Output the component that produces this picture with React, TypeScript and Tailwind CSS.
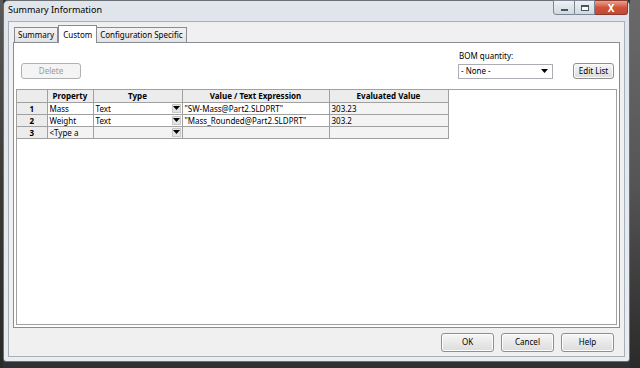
import React from "react";

const font = { fontFamily: '"Noto Sans", "Open Sans", Arial, sans-serif' };

function Arrow() {
  return (
    <svg width="7" height="4" viewBox="0 0 7 4" className="block">
      <path d="M0 0 L7 0 L3.5 4 Z" fill="#000" />
    </svg>
  );
}

function Btn({ children, className = "" }: { children: React.ReactNode; className?: string }) {
  return (
    <div
      className={
        "flex items-center justify-center rounded-[3px] border border-[#8e8f8f] bg-gradient-to-b from-[#f6f6f6] to-[#dcdcdc] text-[8px] text-black shadow-[inset_0_0_0_1px_#fcfcfc] " +
        className
      }
    >
      {children}
    </div>
  );
}

const rows = [
  { n: "1", p: "Mass", t: "Text", v: "\"SW-Mass@Part2.SLDPRT\"", e: "303.23" },
  { n: "2", p: "Weight", t: "Text", v: "\"Mass_Rounded@Part2.SLDPRT\"", e: "303.2" },
  { n: "3", p: "<Type a", t: "", v: "", e: "" },
];

export default function App() {
  return (
    <div className="relative w-[640px] h-[368px] overflow-hidden bg-[#2f3133] flex" style={font}>
      <div className="w-[3px] h-full bg-gradient-to-b from-[#5a5a5a] via-[#3d3a35] to-[#2a2a2a]" />
      <div className="w-[627px] h-[362px] flex flex-col bg-gradient-to-b from-[#dfe5ea] to-[#e9edf0] border border-[#6b7075] rounded-t-[5px] rounded-b-[3px]">
        {/* title bar */}
        <div className="relative h-[20px] flex items-start shrink-0">
          <div className="pl-[4px] pt-[3px] text-[9px] leading-[12px] text-black">Summary Information</div>
          <div className="ml-auto mr-[1px] flex h-[15px] -mt-[1px]">
            <div className="w-[22px] h-full border border-[#7c8590] rounded-bl-[3px] bg-gradient-to-b from-[#eef2f5] to-[#cfd7df] flex items-center justify-center">
              <div className="w-[7px] h-[2px] border border-[#4a5560] bg-white mt-[4px]" />
            </div>
            <div className="w-[20px] h-full border-y border-r border-[#7c8590] bg-gradient-to-b from-[#eef2f5] to-[#cfd7df] flex items-center justify-center">
              <div className="w-[8px] h-[6px] border border-[#4a5560] border-t-2 bg-white" />
            </div>
            <div className="w-[33px] h-full border-y border-r border-[#8a3a2e] rounded-br-[3px] bg-gradient-to-b from-[#e8a190] via-[#d0533c] to-[#c24a33] flex items-center justify-center text-white text-[10px] font-bold leading-none">
              X
            </div>
          </div>
        </div>
        {/* client */}
        <div className="mx-[4px] flex-1 flex flex-col bg-[#f0f0f0] border border-[#a7b0b9]">
          {/* tabs */}
          <div className="flex items-end h-[20px] pl-[5px] shrink-0">
            <div className="h-[15px] px-[3px] flex items-center text-[8px] border border-[#898c95] border-b-0 bg-gradient-to-b from-[#f2f2f2] to-[#e3e3e3]">
              Summary
            </div>
            <div className="relative z-10 -mb-[1px] h-[18px] px-[4px] flex items-center text-[8px] border border-[#898c95] border-b-0 bg-white">
              Custom
            </div>
            <div className="h-[15px] px-[3px] flex items-center text-[8px] border border-[#898c95] border-b-0 border-l-0 bg-gradient-to-b from-[#f2f2f2] to-[#e3e3e3]">
              Configuration Specific
            </div>
          </div>
          {/* panel */}
          <div className="mx-[4px] h-[286px] shrink-0 bg-white border border-[#898c95] flex flex-col">
            <div className="h-[46px] flex shrink-0">
              <div className="ml-[7px] mt-[20px] w-[60px] h-[16px] rounded-[3px] border border-[#adb2b5] bg-[#f4f4f4] flex items-center justify-center text-[8px] text-[#9a9a9a]">
                Delete
              </div>
              <div className="ml-auto mr-[5px] flex flex-col">
                <div className="mt-[7px] ml-[1px] text-[8px] leading-[11px]">BOM quantity:</div>
                <div className="mt-[2px] flex items-center">
                  <div className="w-[95px] h-[15px] border border-[#abadb3] bg-white flex items-center px-[2px] text-[8px]">
                    <span>- None -</span>
                    <span className="ml-auto mr-[2px]"><Arrow /></span>
                  </div>
                  <Btn className="ml-[20px] w-[41px] h-[16px] rounded-[2px]">Edit List</Btn>
                </div>
              </div>
            </div>
            <div className="mx-[2px] mb-[2px] flex-1 border border-[#a0a0a0] bg-white">
              <table className="border-collapse text-[8px] leading-[11px] table-fixed w-[431px]">
                <colgroup>
                  <col className="w-[30px]" />
                  <col className="w-[46px]" />
                  <col className="w-[89px]" />
                  <col className="w-[147px]" />
                  <col className="w-[119px]" />
                </colgroup>
                <thead>
                  <tr className="h-[12px] bg-[#ececec]">
                    <th className="border border-[#a0a0a0] border-t-0 border-l-0 p-0" />
                    <th className="border border-[#a0a0a0] border-t-0 p-0 font-bold">Property</th>
                    <th className="border border-[#a0a0a0] border-t-0 p-0 font-bold">Type</th>
                    <th className="border border-[#a0a0a0] border-t-0 p-0 font-bold">Value / Text Expression</th>
                    <th className="border border-[#a0a0a0] border-t-0 p-0 font-bold">Evaluated Value</th>
                  </tr>
                </thead>
                <tbody>
                  {rows.map((r, i) => (
                    <tr key={r.n} className="h-[12px]">
                      <td className="border border-[#a0a0a0] border-l-0 bg-[#ececec] p-0 text-center font-bold">{r.n}</td>
                      <td className={"border border-[#a0a0a0] p-0 pl-[2px] whitespace-nowrap overflow-hidden " + (i === 2 ? "bg-[#f3f3f3]" : "bg-white")}>{r.p}</td>
                      <td className={"border border-[#a0a0a0] p-0 " + (i === 2 ? "bg-[#f3f3f3]" : "bg-white")}>
                        <div className="flex items-center h-[11px]">
                          <span className="pl-[2px]">{r.t}</span>
                          <span className="ml-auto mr-[1px] w-[9px] h-[9px] bg-[#e4e4e4] border border-[#c8c8c8] flex items-center justify-center">
                            <Arrow />
                          </span>
                        </div>
                      </td>
                      <td className={"border border-[#a0a0a0] p-0 pl-[2px] whitespace-nowrap overflow-hidden " + (i === 2 ? "bg-[#f3f3f3]" : "bg-white")}>{r.v}</td>
                      <td className="border border-[#a0a0a0] p-0 pl-[2px] bg-[#f3f3f3]">{r.e}</td>
                    </tr>
                  ))}
                </tbody>
              </table>
            </div>
          </div>
          {/* buttons */}
          <div className="flex-1 flex items-center justify-end pr-[10px] gap-[7px]">
            <Btn className="w-[53px] h-[19px]">OK</Btn>
            <Btn className="w-[53px] h-[19px]">Cancel</Btn>
            <Btn className="w-[53px] h-[19px]">Help</Btn>
          </div>
        </div>
        <div className="h-[4px] shrink-0" />
      </div>
      <div className="flex-1 h-full bg-gradient-to-b from-[#6a6a6a] via-[#555] to-[#2a2a2a]" />
    </div>
  );
}
